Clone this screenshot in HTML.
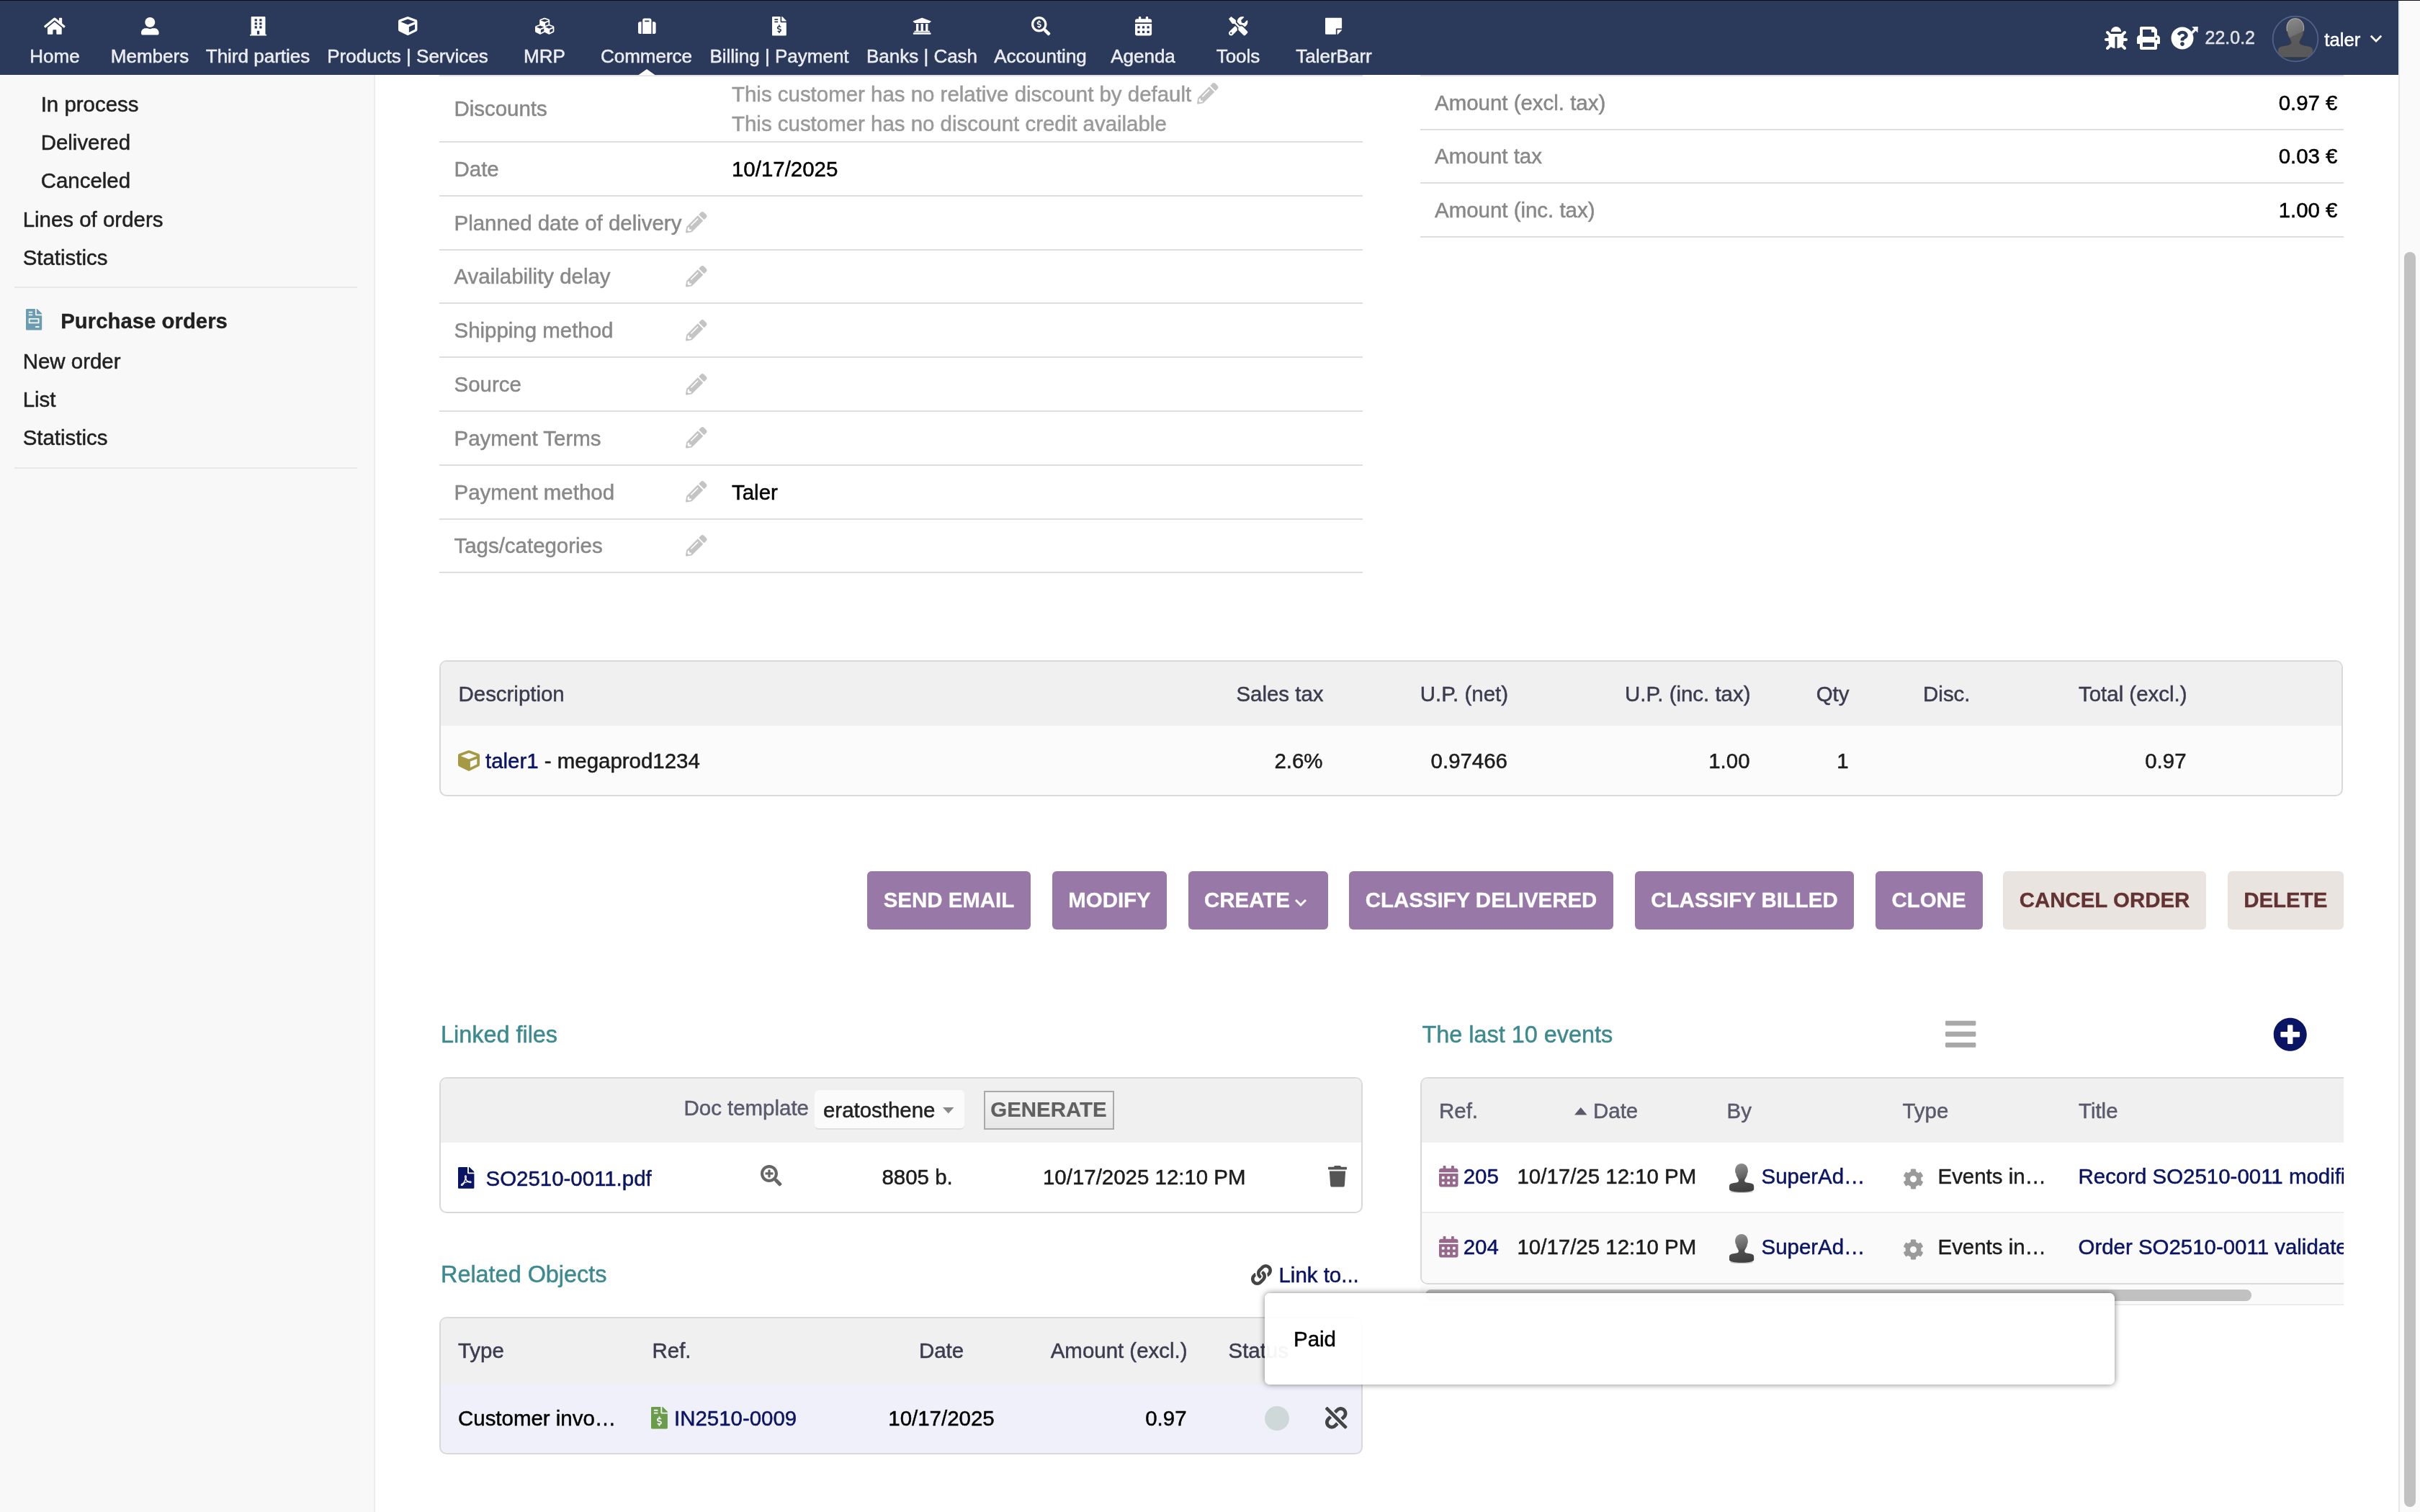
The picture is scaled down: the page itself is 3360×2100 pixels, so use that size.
<!DOCTYPE html>
<html><head><meta charset="utf-8"><title>Order</title>
<style>
html,body{margin:0;padding:0}
body{width:3360px;height:2100px;background:#fff;position:relative;font-family:"Liberation Sans",sans-serif;font-size:29.44px;color:#000}
div,svg{box-sizing:border-box}
svg{display:block;overflow:visible}
#root{-webkit-text-stroke:0.5px}
</style></head><body>
<div id="root" style="position:absolute;left:0;top:0;width:3360px;height:2100px;overflow:hidden;will-change:transform">
<div style="position:absolute;left:0.0px;top:104.0px;width:521.0px;height:1996.0px;background:#f8f8f8;border-right:2px solid #ececec"></div>
<div style="position:absolute;left:3330.0px;top:0.0px;width:30.0px;height:2100.0px;background:#fafafa;border-left:2px solid #e8e8e8"></div>
<div style="position:absolute;left:3338.0px;top:350.2px;width:16.0px;height:1743.0px;background:#c1c1c1;border-radius:8px"></div>
<div style="position:absolute;top:126.94px;font-size:29.44px;line-height:35.33px;color:#212121;white-space:pre;left:56.7px;">In process</div>
<div style="position:absolute;top:180.14px;font-size:29.44px;line-height:35.33px;color:#212121;white-space:pre;left:56.7px;">Delivered</div>
<div style="position:absolute;top:233.34px;font-size:29.44px;line-height:35.33px;color:#212121;white-space:pre;left:56.7px;">Canceled</div>
<div style="position:absolute;top:286.54px;font-size:29.44px;line-height:35.33px;color:#212121;white-space:pre;left:31.7px;">Lines of orders</div>
<div style="position:absolute;top:339.74px;font-size:29.44px;line-height:35.33px;color:#212121;white-space:pre;left:31.7px;">Statistics</div>
<div style="position:absolute;top:483.74px;font-size:29.44px;line-height:35.33px;color:#212121;white-space:pre;left:31.7px;">New order</div>
<div style="position:absolute;top:536.94px;font-size:29.44px;line-height:35.33px;color:#212121;white-space:pre;left:31.7px;">List</div>
<div style="position:absolute;top:590.34px;font-size:29.44px;line-height:35.33px;color:#212121;white-space:pre;left:31.7px;">Statistics</div>
<div style="position:absolute;top:428.22px;font-size:29.35px;line-height:35.22px;color:#212121;white-space:pre;font-weight:700;-webkit-text-stroke:0.3px;left:84.3px;">Purchase orders</div>
<div style="position:absolute;left:20.0px;top:397.5px;width:476.0px;height:2.0px;background:#e8e8e8"></div>
<div style="position:absolute;left:20.0px;top:648.5px;width:476.0px;height:2.0px;background:#e8e8e8"></div>
<svg style="position:absolute;left:35.7px;top:429.4px;" width="22.2" height="29.6" viewBox="0 0 384 512" preserveAspectRatio="none"><path fill="#6a9db2" d="M288 256H96v64h192v-64zm89-151L279.100 7c-4.500-4.500-10.600-7-17-7H256v128h128v-6.100c0-6.300-2.500-12.400-7-16.900zm-153 31V0H24C10.700 0 0 10.700 0 24v464c0 13.300 10.700 24 24 24h336c13.300 0 24-10.700 24-24V160H248c-13.200 0-24-10.800-24-24zM64 72c0-4.420 3.580-8 8-8h80c4.420 0 8 3.580 8 8v16c0 4.420-3.580 8-8 8H72c-4.420 0-8-3.580-8-8V72zm0 64c0-4.420 3.580-8 8-8h80c4.420 0 8 3.580 8 8v16c0 4.420-3.580 8-8 8H72c-4.420 0-8-3.580-8-8v-16zm256 304c0 4.420-3.580 8-8 8h-80c-4.420 0-8-3.580-8-8v-16c0-4.420 3.580-8 8-8h80c4.420 0 8 3.580 8 8v16zm0-200v96c0 8.840-7.160 16-16 16H80c-8.840 0-16-7.160-16-16v-96c0-8.840 7.160-16 16-16h224c8.840 0 16 7.160 16 16z"/></svg>
<div style="position:absolute;left:610.0px;top:103.5px;width:1282.0px;height:2.0px;background:#dedede"></div>
<div style="position:absolute;left:610.0px;top:196.0px;width:1282.0px;height:2.0px;background:#dedede"></div>
<div style="position:absolute;left:610.0px;top:271.0px;width:1282.0px;height:2.0px;background:#dedede"></div>
<div style="position:absolute;left:610.0px;top:345.5px;width:1282.0px;height:2.0px;background:#dedede"></div>
<div style="position:absolute;left:610.0px;top:420.0px;width:1282.0px;height:2.0px;background:#dedede"></div>
<div style="position:absolute;left:610.0px;top:495.0px;width:1282.0px;height:2.0px;background:#dedede"></div>
<div style="position:absolute;left:610.0px;top:570.0px;width:1282.0px;height:2.0px;background:#dedede"></div>
<div style="position:absolute;left:610.0px;top:644.5px;width:1282.0px;height:2.0px;background:#dedede"></div>
<div style="position:absolute;left:610.0px;top:719.5px;width:1282.0px;height:2.0px;background:#dedede"></div>
<div style="position:absolute;left:610.0px;top:794.0px;width:1282.0px;height:2.0px;background:#dedede"></div>
<div style="position:absolute;top:133.39px;font-size:29.44px;line-height:35.33px;color:#888888;white-space:pre;left:630.5px;">Discounts</div>
<div style="position:absolute;top:217.14px;font-size:29.44px;line-height:35.33px;color:#888888;white-space:pre;left:630.5px;">Date</div>
<div style="position:absolute;top:217.14px;font-size:29.44px;line-height:35.33px;color:#000;white-space:pre;left:1016.0px;">10/17/2025</div>
<div style="position:absolute;top:291.89px;font-size:29.44px;line-height:35.33px;color:#888888;white-space:pre;left:630.5px;">Planned date of delivery</div>
<svg style="position:absolute;left:952.0px;top:294.2px;" width="29.5" height="29.5" viewBox="0 0 512 512" preserveAspectRatio="none"><path fill="#c4c4c4" d="M497.9 142.1l-46.1 46.1c-4.7 4.7-12.3 4.7-17 0l-111-111c-4.7-4.7-4.7-12.3 0-17l46.1-46.1c18.7-18.7 49.1-18.7 67.9 0l60.1 60.1c18.8 18.7 18.8 49.1 0 67.9zM284.2 99.8L21.6 362.4.4 483.9c-2.9 16.4 11.4 30.6 27.8 27.8l121.5-21.3 262.6-262.6c4.7-4.7 4.7-12.3 0-17l-111-111c-4.8-4.7-12.4-4.7-17.1 0zM124.1 339.9c-5.5-5.5-5.5-14.3 0-19.8l154-154c5.5-5.5 14.3-5.5 19.8 0s5.5 14.3 0 19.8l-154 154c-5.5 5.5-14.3 5.5-19.8 0zM88 424h48v36.3l-64.5 11.3-31.1-31.1L51.7 376H88v48z"/></svg>
<div style="position:absolute;top:366.39px;font-size:29.44px;line-height:35.33px;color:#888888;white-space:pre;left:630.5px;">Availability delay</div>
<svg style="position:absolute;left:952.0px;top:368.8px;" width="29.5" height="29.5" viewBox="0 0 512 512" preserveAspectRatio="none"><path fill="#c4c4c4" d="M497.9 142.1l-46.1 46.1c-4.7 4.7-12.3 4.7-17 0l-111-111c-4.7-4.7-4.7-12.3 0-17l46.1-46.1c18.7-18.7 49.1-18.7 67.9 0l60.1 60.1c18.8 18.7 18.8 49.1 0 67.9zM284.2 99.8L21.6 362.4.4 483.9c-2.9 16.4 11.4 30.6 27.8 27.8l121.5-21.3 262.6-262.6c4.7-4.7 4.7-12.3 0-17l-111-111c-4.8-4.7-12.4-4.7-17.1 0zM124.1 339.9c-5.5-5.5-5.5-14.3 0-19.8l154-154c5.5-5.5 14.3-5.5 19.8 0s5.5 14.3 0 19.8l-154 154c-5.5 5.5-14.3 5.5-19.8 0zM88 424h48v36.3l-64.5 11.3-31.1-31.1L51.7 376H88v48z"/></svg>
<div style="position:absolute;top:441.14px;font-size:29.44px;line-height:35.33px;color:#888888;white-space:pre;left:630.5px;">Shipping method</div>
<svg style="position:absolute;left:952.0px;top:443.5px;" width="29.5" height="29.5" viewBox="0 0 512 512" preserveAspectRatio="none"><path fill="#c4c4c4" d="M497.9 142.1l-46.1 46.1c-4.7 4.7-12.3 4.7-17 0l-111-111c-4.7-4.7-4.7-12.3 0-17l46.1-46.1c18.7-18.7 49.1-18.7 67.9 0l60.1 60.1c18.8 18.7 18.8 49.1 0 67.9zM284.2 99.8L21.6 362.4.4 483.9c-2.9 16.4 11.4 30.6 27.8 27.8l121.5-21.3 262.6-262.6c4.7-4.7 4.7-12.3 0-17l-111-111c-4.8-4.7-12.4-4.7-17.1 0zM124.1 339.9c-5.5-5.5-5.5-14.3 0-19.8l154-154c5.5-5.5 14.3-5.5 19.8 0s5.5 14.3 0 19.8l-154 154c-5.5 5.5-14.3 5.5-19.8 0zM88 424h48v36.3l-64.5 11.3-31.1-31.1L51.7 376H88v48z"/></svg>
<div style="position:absolute;top:516.14px;font-size:29.44px;line-height:35.33px;color:#888888;white-space:pre;left:630.5px;">Source</div>
<svg style="position:absolute;left:952.0px;top:518.5px;" width="29.5" height="29.5" viewBox="0 0 512 512" preserveAspectRatio="none"><path fill="#c4c4c4" d="M497.9 142.1l-46.1 46.1c-4.7 4.7-12.3 4.7-17 0l-111-111c-4.7-4.7-4.7-12.3 0-17l46.1-46.1c18.7-18.7 49.1-18.7 67.9 0l60.1 60.1c18.8 18.7 18.8 49.1 0 67.9zM284.2 99.8L21.6 362.4.4 483.9c-2.9 16.4 11.4 30.6 27.8 27.8l121.5-21.3 262.6-262.6c4.7-4.7 4.7-12.3 0-17l-111-111c-4.8-4.7-12.4-4.7-17.1 0zM124.1 339.9c-5.5-5.5-5.5-14.3 0-19.8l154-154c5.5-5.5 14.3-5.5 19.8 0s5.5 14.3 0 19.8l-154 154c-5.5 5.5-14.3 5.5-19.8 0zM88 424h48v36.3l-64.5 11.3-31.1-31.1L51.7 376H88v48z"/></svg>
<div style="position:absolute;top:590.89px;font-size:29.44px;line-height:35.33px;color:#888888;white-space:pre;left:630.5px;">Payment Terms</div>
<svg style="position:absolute;left:952.0px;top:593.2px;" width="29.5" height="29.5" viewBox="0 0 512 512" preserveAspectRatio="none"><path fill="#c4c4c4" d="M497.9 142.1l-46.1 46.1c-4.7 4.7-12.3 4.7-17 0l-111-111c-4.7-4.7-4.7-12.3 0-17l46.1-46.1c18.7-18.7 49.1-18.7 67.9 0l60.1 60.1c18.8 18.7 18.8 49.1 0 67.9zM284.2 99.8L21.6 362.4.4 483.9c-2.9 16.4 11.4 30.6 27.8 27.8l121.5-21.3 262.6-262.6c4.7-4.7 4.7-12.3 0-17l-111-111c-4.8-4.7-12.4-4.7-17.1 0zM124.1 339.9c-5.5-5.5-5.5-14.3 0-19.8l154-154c5.5-5.5 14.3-5.5 19.8 0s5.5 14.3 0 19.8l-154 154c-5.5 5.5-14.3 5.5-19.8 0zM88 424h48v36.3l-64.5 11.3-31.1-31.1L51.7 376H88v48z"/></svg>
<div style="position:absolute;top:665.64px;font-size:29.44px;line-height:35.33px;color:#888888;white-space:pre;left:630.5px;">Payment method</div>
<div style="position:absolute;top:665.64px;font-size:29.44px;line-height:35.33px;color:#000;white-space:pre;left:1016.0px;">Taler</div>
<svg style="position:absolute;left:952.0px;top:668.0px;" width="29.5" height="29.5" viewBox="0 0 512 512" preserveAspectRatio="none"><path fill="#c4c4c4" d="M497.9 142.1l-46.1 46.1c-4.7 4.7-12.3 4.7-17 0l-111-111c-4.7-4.7-4.7-12.3 0-17l46.1-46.1c18.7-18.7 49.1-18.7 67.9 0l60.1 60.1c18.8 18.7 18.8 49.1 0 67.9zM284.2 99.8L21.6 362.4.4 483.9c-2.9 16.4 11.4 30.6 27.8 27.8l121.5-21.3 262.6-262.6c4.7-4.7 4.7-12.3 0-17l-111-111c-4.8-4.7-12.4-4.7-17.1 0zM124.1 339.9c-5.5-5.5-5.5-14.3 0-19.8l154-154c5.5-5.5 14.3-5.5 19.8 0s5.5 14.3 0 19.8l-154 154c-5.5 5.5-14.3 5.5-19.8 0zM88 424h48v36.3l-64.5 11.3-31.1-31.1L51.7 376H88v48z"/></svg>
<div style="position:absolute;top:740.39px;font-size:29.44px;line-height:35.33px;color:#888888;white-space:pre;left:630.5px;">Tags/categories</div>
<svg style="position:absolute;left:952.0px;top:742.8px;" width="29.5" height="29.5" viewBox="0 0 512 512" preserveAspectRatio="none"><path fill="#c4c4c4" d="M497.9 142.1l-46.1 46.1c-4.7 4.7-12.3 4.7-17 0l-111-111c-4.7-4.7-4.7-12.3 0-17l46.1-46.1c18.7-18.7 49.1-18.7 67.9 0l60.1 60.1c18.8 18.7 18.8 49.1 0 67.9zM284.2 99.8L21.6 362.4.4 483.9c-2.9 16.4 11.4 30.6 27.8 27.8l121.5-21.3 262.6-262.6c4.7-4.7 4.7-12.3 0-17l-111-111c-4.8-4.7-12.4-4.7-17.1 0zM124.1 339.9c-5.5-5.5-5.5-14.3 0-19.8l154-154c5.5-5.5 14.3-5.5 19.8 0s5.5 14.3 0 19.8l-154 154c-5.5 5.5-14.3 5.5-19.8 0zM88 424h48v36.3l-64.5 11.3-31.1-31.1L51.7 376H88v48z"/></svg>
<div style="position:absolute;top:112.64px;font-size:29.44px;line-height:35.33px;color:#999;white-space:pre;left:1016.0px;">This customer has no relative discount by default</div>
<div style="position:absolute;top:154.14px;font-size:29.44px;line-height:35.33px;color:#999;white-space:pre;left:1016.0px;">This customer has no discount credit available</div>
<svg style="position:absolute;left:1662.0px;top:115.0px;" width="29.5" height="29.5" viewBox="0 0 512 512" preserveAspectRatio="none"><path fill="#c4c4c4" d="M497.9 142.1l-46.1 46.1c-4.7 4.7-12.3 4.7-17 0l-111-111c-4.7-4.7-4.7-12.3 0-17l46.1-46.1c18.7-18.7 49.1-18.7 67.9 0l60.1 60.1c18.8 18.7 18.8 49.1 0 67.9zM284.2 99.8L21.6 362.4.4 483.9c-2.9 16.4 11.4 30.6 27.8 27.8l121.5-21.3 262.6-262.6c4.7-4.7 4.7-12.3 0-17l-111-111c-4.8-4.7-12.4-4.7-17.1 0zM124.1 339.9c-5.5-5.5-5.5-14.3 0-19.8l154-154c5.5-5.5 14.3-5.5 19.8 0s5.5 14.3 0 19.8l-154 154c-5.5 5.5-14.3 5.5-19.8 0zM88 424h48v36.3l-64.5 11.3-31.1-31.1L51.7 376H88v48z"/></svg>
<div style="position:absolute;left:1972.0px;top:103.5px;width:1282.0px;height:2.0px;background:#dedede"></div>
<div style="position:absolute;top:125.44px;font-size:29.44px;line-height:35.33px;color:#888888;white-space:pre;left:1992.0px;">Amount (excl. tax)</div>
<div style="position:absolute;top:125.44px;font-size:29.44px;line-height:35.33px;color:#000;white-space:pre;right:114.5px;">0.97 €</div>
<div style="position:absolute;left:1972.0px;top:179.0px;width:1282.0px;height:2.0px;background:#dedede"></div>
<div style="position:absolute;top:199.24px;font-size:29.44px;line-height:35.33px;color:#888888;white-space:pre;left:1992.0px;">Amount tax</div>
<div style="position:absolute;top:199.24px;font-size:29.44px;line-height:35.33px;color:#000;white-space:pre;right:114.5px;">0.03 €</div>
<div style="position:absolute;left:1972.0px;top:253.0px;width:1282.0px;height:2.0px;background:#dedede"></div>
<div style="position:absolute;top:274.34px;font-size:29.44px;line-height:35.33px;color:#888888;white-space:pre;left:1992.0px;">Amount (inc. tax)</div>
<div style="position:absolute;top:274.34px;font-size:29.44px;line-height:35.33px;color:#000;white-space:pre;right:114.5px;">1.00 €</div>
<div style="position:absolute;left:1972.0px;top:327.7px;width:1282.0px;height:2.0px;background:#dedede"></div>
<div style="position:absolute;left:0.0px;top:0.0px;width:3330.0px;height:104.0px;background:#2b3a5a"></div>
<div style="position:absolute;left:0.0px;top:0.0px;width:3360.0px;height:1.0px;background:#0c0f1a"></div>
<div style="position:absolute;top:62.69px;font-size:26px;line-height:31.20px;color:#eceef3;white-space:pre;left:76.0px;transform:translateX(-50%);">Home</div>
<div style="position:absolute;top:62.69px;font-size:26px;line-height:31.20px;color:#eceef3;white-space:pre;left:208.0px;transform:translateX(-50%);">Members</div>
<div style="position:absolute;top:62.69px;font-size:26px;line-height:31.20px;color:#eceef3;white-space:pre;left:358.0px;transform:translateX(-50%);">Third parties</div>
<div style="position:absolute;top:62.69px;font-size:26px;line-height:31.20px;color:#eceef3;white-space:pre;left:566.0px;transform:translateX(-50%);">Products | Services</div>
<div style="position:absolute;top:62.69px;font-size:26px;line-height:31.20px;color:#eceef3;white-space:pre;left:756.0px;transform:translateX(-50%);">MRP</div>
<div style="position:absolute;top:62.69px;font-size:26px;line-height:31.20px;color:#eceef3;white-space:pre;left:897.5px;transform:translateX(-50%);">Commerce</div>
<div style="position:absolute;top:62.69px;font-size:26px;line-height:31.20px;color:#eceef3;white-space:pre;left:1082.0px;transform:translateX(-50%);">Billing | Payment</div>
<div style="position:absolute;top:62.69px;font-size:26px;line-height:31.20px;color:#eceef3;white-space:pre;left:1280.0px;transform:translateX(-50%);">Banks | Cash</div>
<div style="position:absolute;top:62.69px;font-size:26px;line-height:31.20px;color:#eceef3;white-space:pre;left:1444.5px;transform:translateX(-50%);">Accounting</div>
<div style="position:absolute;top:62.69px;font-size:26px;line-height:31.20px;color:#eceef3;white-space:pre;left:1587.0px;transform:translateX(-50%);">Agenda</div>
<div style="position:absolute;top:62.69px;font-size:26px;line-height:31.20px;color:#eceef3;white-space:pre;left:1719.0px;transform:translateX(-50%);">Tools</div>
<div style="position:absolute;top:62.69px;font-size:26px;line-height:31.20px;color:#eceef3;white-space:pre;left:1852.0px;transform:translateX(-50%);">TalerBarr</div>
<svg style="position:absolute;left:61.4px;top:22.9px;" width="29.7" height="26.4" viewBox="0 0 576 512" preserveAspectRatio="none"><path fill="#fff" d="M280.37 148.26L96 300.11V464a16 16 0 0 0 16 16l112.060-.29a16 16 0 0 0 15.920-16V368a16 16 0 0 1 16-16h64a16 16 0 0 1 16 16v95.640a16 16 0 0 0 16 16.050L464 480a16 16 0 0 0 16-16V300L295.670 148.260a12.190 12.190 0 0 0-15.300 0zM571.600 251.470L488 182.560V44.050a12 12 0 0 0-12-12h-56a12 12 0 0 0-12 12v72.610L318.470 43a48 48 0 0 0-61 0L4.340 251.470a12 12 0 0 0-1.600 16.900l25.500 31A12 12 0 0 0 45.150 301l235.220-193.740a12.190 12.190 0 0 1 15.300 0L530.900 301a12 12 0 0 0 16.900-1.600l25.500-31a12 12 0 0 0-1.700-16.930z"/></svg>
<svg style="position:absolute;left:195.7px;top:23.8px;" width="24.6" height="24.6" viewBox="0 0 512 512" preserveAspectRatio="none"><path fill="#fff" d="M256 288c79.5 0 144-64.500 144-144S335.500 0 256 0 112 64.500 112 144s64.500 144 144 144zm128 32h-55.100c-22.200 10.200-46.900 16-72.900 16s-50.600-5.800-72.900-16H128C57.300 320 0 377.300 0 448v16c0 26.500 21.500 48 48 48h416c26.500 0 48-21.500 48-48v-16c0-70.700-57.300-128-128-128z"/></svg>
<svg style="position:absolute;left:347.1px;top:22.9px;" width="23.1" height="26.4" viewBox="0 0 448 512" preserveAspectRatio="none"><path fill="#fff" d="M436 480h-20V24c0-13.255-10.745-24-24-24H56C42.745 0 32 10.745 32 24v456H12c-6.627 0-12 5.373-12 12v20h448v-20c0-6.627-5.373-12-12-12zM128 76c0-6.627 5.373-12 12-12h40c6.627 0 12 5.373 12 12v40c0 6.627-5.373 12-12 12h-40c-6.627 0-12-5.373-12-12V76zm0 96c0-6.627 5.373-12 12-12h40c6.627 0 12 5.373 12 12v40c0 6.627-5.373 12-12 12h-40c-6.627 0-12-5.373-12-12v-40zm52 148h-40c-6.627 0-12-5.373-12-12v-40c0-6.627 5.373-12 12-12h40c6.627 0 12 5.373 12 12v40c0 6.627-5.373 12-12 12zm76 160h-64v-84c0-6.627 5.373-12 12-12h40c6.627 0 12 5.373 12 12v84zm64-172c0 6.627-5.373 12-12 12h-40c-6.627 0-12-5.373-12-12v-40c0-6.627 5.373-12 12-12h40c6.627 0 12 5.373 12 12v40zm0-96c0 6.627-5.373 12-12 12h-40c-6.627 0-12-5.373-12-12v-40c0-6.627 5.373-12 12-12h40c6.627 0 12 5.373 12 12v40zm0-96c0 6.627-5.373 12-12 12h-40c-6.627 0-12-5.373-12-12V76c0-6.627 5.373-12 12-12h40c6.627 0 12 5.373 12 12v40z"/></svg>
<svg style="position:absolute;left:553.3px;top:22.9px;" width="26.4" height="26.4" viewBox="0 0 512 512" preserveAspectRatio="none"><path fill="#fff" d="M239.1 6.3l-208 78c-18.7 7-31.1 25-31.1 45v225.1c0 18.2 10.3 34.8 26.5 42.9l208 104c13.5 6.8 29.4 6.8 42.9 0l208-104c16.3-8.1 26.5-24.8 26.5-42.9V129.3c0-20-12.4-37.9-31.1-44.9l-208-78C262 2.2 250 2.2 239.1 6.3zM256 68.4l192 72v1.1l-192 78-192-78v-1.1l192-72zm32 356V275.5l160-65v133.9l-160 80z"/></svg>
<svg style="position:absolute;left:743.2px;top:22.9px;" width="26.4" height="26.4" viewBox="0 0 512 512" preserveAspectRatio="none"><path fill="#fff" d="M488.6 250.2L392 214V105.5c0-15-9.3-28.400-23.400-33.700l-100-37.500c-8.100-3.100-17.100-3.100-25.300 0l-100 37.500c-14.100 5.300-23.400 18.700-23.400 33.700V214l-96.600 36.200C9.300 255.500 0 268.900 0 283.900V394c0 13.600 7.700 26.100 19.900 32.200l100 50c10.100 5.100 22.100 5.100 32.200 0l103.900-52 103.900 52c10.100 5.100 22.100 5.100 32.200 0l100-50c12.200-6.100 19.900-18.600 19.900-32.200V283.900c0-15-9.300-28.400-23.400-33.700zM358 214.800l-85 31.900v-68.200l85-37v73.300zM154 104.100l102-38.200 102 38.200v.6l-102 41.400-102-41.400v-.6zm84 291.100l-85 42.500v-79.100l85-38.800v75.400zm0-112l-102 41.400-102-41.400v-.6l102-38.200 102 38.200v.6zm240 112l-85 42.500v-79.100l85-38.800v75.400zm0-112l-102 41.400-102-41.400v-.6l102-38.200 102 38.200v.6z"/></svg>
<svg style="position:absolute;left:885.7px;top:23.8px;" width="24.6" height="24.6" viewBox="0 0 512 512" preserveAspectRatio="none"><path fill="#fff" d="M128 480h256V80c0-26.5-21.5-48-48-48H176c-26.5 0-48 21.5-48 48v400zm64-384h128v32H192V96zm320 80v256c0 26.5-21.5 48-48 48h-48V128h48c26.5 0 48 21.5 48 48zM96 480H48c-26.5 0-48-21.5-48-48V176c0-26.5 21.5-48 48-48h48v352z"/></svg>
<svg style="position:absolute;left:1072.1px;top:22.9px;" width="19.8" height="26.4" viewBox="0 0 384 512" preserveAspectRatio="none"><path fill="#fff" d="M377 105L279.100 7c-4.500-4.500-10.600-7-17-7H256v128h128v-6.100c0-6.300-2.500-12.400-7-16.900zm-153 31V0H24C10.700 0 0 10.700 0 24v464c0 13.300 10.700 24 24 24h336c13.300 0 24-10.700 24-24V160H248c-13.200 0-24-10.800-24-24zM64 72c0-4.420 3.580-8 8-8h80c4.420 0 8 3.580 8 8v16c0 4.420-3.580 8-8 8H72c-4.420 0-8-3.580-8-8V72zm0 80v-16c0-4.420 3.580-8 8-8h80c4.420 0 8 3.580 8 8v16c0 4.420-3.580 8-8 8H72c-4.420 0-8-3.580-8-8zm144 263.880V440c0 4.420-3.580 8-8 8h-16c-4.420 0-8-3.580-8-8v-24.290c-11.290-.58-22.270-4.520-31.370-11.350-3.900-2.930-4.100-8.770-.57-12.140l11.750-11.210c2.770-2.640 6.890-2.760 10.130-.73 3.870 2.420 8.260 3.720 12.820 3.720h28.110c6.500 0 11.800-5.920 11.800-13.190 0-5.950-3.610-11.190-8.770-12.730l-45-13.500c-18.590-5.580-31.580-23.420-31.580-43.390 0-24.520 19.050-44.440 42.670-45.070V232c0-4.420 3.580-8 8-8h16c4.420 0 8 3.580 8 8v24.290c11.290.58 22.270 4.510 31.370 11.350 3.900 2.930 4.100 8.770.57 12.140l-11.750 11.210c-2.770 2.640-6.890 2.760-10.130.73-3.870-2.430-8.260-3.720-12.820-3.720h-28.110c-6.500 0-11.800 5.920-11.800 13.190 0 5.950 3.610 11.190 8.770 12.730l45 13.500c18.590 5.580 31.580 23.420 31.580 43.390 0 24.530-19.050 44.440-42.670 45.070z"/></svg>
<svg style="position:absolute;left:1266.6px;top:22.9px;" width="26.4" height="26.4" viewBox="0 0 512 512" preserveAspectRatio="none"><path fill="#fff" d="M496 128v16a8 8 0 0 1-8 8h-24v12c0 6.627-5.373 12-12 12H60c-6.627 0-12-5.373-12-12v-12H24a8 8 0 0 1-8-8v-16a8 8 0 0 1 4.941-7.392l232-88a7.996 7.996 0 0 1 6.118 0l232 88A8 8 0 0 1 496 128zm-24 304H40c-13.255 0-24 10.745-24 24v16a8 8 0 0 0 8 8h464a8 8 0 0 0 8-8v-16c0-13.255-10.745-24-24-24zM96 192v192H60c-6.627 0-12 5.373-12 12v20h416v-20c0-6.627-5.373-12-12-12h-36V192h-64v192h-64V192h-64v192h-64V192H96z"/></svg>
<svg style="position:absolute;left:1432.0px;top:22.9px;" width="26.4" height="26.4" viewBox="0 0 512 512" preserveAspectRatio="none"><path fill="#fff" d="M505.040 442.660l-99.710-99.690c-4.500-4.500-10.600-7-17-7h-16.300c27.600-35.300 44-79.690 44-127.990C416.030 93.090 322.920 0 208.020 0S0 93.090 0 207.980s93.110 207.980 208.020 207.980c48.300 0 92.710-16.400 128.010-44v16.300c0 6.400 2.500 12.500 7 17l99.710 99.690c9.400 9.400 24.600 9.400 33.900 0l28.300-28.300c9.400-9.400 9.400-24.590.1-33.990zm-297.020-90.700c-79.540 0-144-64.340-144-143.980 0-79.530 64.350-143.980 144-143.980 79.540 0 144 64.340 144 143.980 0 79.530-64.350 143.980-144 143.980zm27.110-152.540l-45.010-13.500c-5.160-1.550-8.770-6.780-8.770-12.730 0-7.270 5.300-13.190 11.800-13.190h28.110c4.560 0 8.960 1.290 12.820 3.720 3.240 2.030 7.360 1.910 10.130-.73l11.750-11.210c3.530-3.370 3.330-9.210-.57-12.140-9.100-6.830-20.080-10.770-31.370-11.350V112c0-4.420-3.580-8-8-8h-16c-4.420 0-8 3.580-8 8v16.120c-23.630.63-42.680 20.550-42.680 45.070 0 19.970 12.990 37.810 31.580 43.390l45.010 13.500c5.160 1.550 8.770 6.780 8.770 12.730 0 7.270-5.300 13.190-11.800 13.190h-28.100c-4.560 0-8.960-1.290-12.820-3.720-3.240-2.030-7.360-1.910-10.130.73l-11.750 11.210c-3.530 3.370-3.330 9.210.57 12.140 9.100 6.830 20.080 10.770 31.370 11.350V304c0 4.420 3.580 8 8 8h16c4.420 0 8-3.580 8-8v-16.120c23.630-.63 42.680-20.540 42.680-45.070 0-19.970-12.990-37.810-31.590-43.390z"/></svg>
<svg style="position:absolute;left:1576.2px;top:22.9px;" width="23.1" height="26.4" viewBox="0 0 448 512" preserveAspectRatio="none"><path fill="#fff" d="M0 464c0 26.5 21.5 48 48 48h352c26.5 0 48-21.5 48-48V192H0v272zm320-196c0-6.6 5.4-12 12-12h40c6.6 0 12 5.4 12 12v40c0 6.6-5.4 12-12 12h-40c-6.6 0-12-5.4-12-12v-40zm0 128c0-6.6 5.4-12 12-12h40c6.6 0 12 5.4 12 12v40c0 6.6-5.4 12-12 12h-40c-6.6 0-12-5.4-12-12v-40zM192 268c0-6.6 5.4-12 12-12h40c6.6 0 12 5.4 12 12v40c0 6.6-5.4 12-12 12h-40c-6.6 0-12-5.4-12-12v-40zm0 128c0-6.6 5.4-12 12-12h40c6.6 0 12 5.4 12 12v40c0 6.6-5.4 12-12 12h-40c-6.6 0-12-5.4-12-12v-40zM64 268c0-6.6 5.4-12 12-12h40c6.6 0 12 5.4 12 12v40c0 6.6-5.4 12-12 12H76c-6.6 0-12-5.4-12-12v-40zm0 128c0-6.6 5.4-12 12-12h40c6.6 0 12 5.4 12 12v40c0 6.6-5.4 12-12 12H76c-6.6 0-12-5.4-12-12v-40zM400 64h-48V16c0-8.8-7.2-16-16-16h-32c-8.8 0-16 7.2-16 16v48H160V16c0-8.8-7.2-16-16-16h-32c-8.8 0-16 7.2-16 16v48H48C21.5 64 0 85.5 0 112v48h448v-48c0-26.5-21.5-48-48-48z"/></svg>
<svg style="position:absolute;left:1706.4px;top:22.9px;" width="26.4" height="26.4" viewBox="0 0 512 512" preserveAspectRatio="none"><path fill="#fff" d="M501.1 395.7L384 278.600c-23.100-23.100-57.600-27.600-85.400-13.900L192 158.100V96L64 0 0 64l96 128h62.100l106.600 106.600c-13.600 27.800-9.200 62.300 13.900 85.400l117.100 117.100c14.600 14.600 38.200 14.600 52.700 0l52.700-52.700c14.500-14.600 14.500-38.200 0-52.700zM331.700 225c28.300 0 54.900 11 74.900 31l19.400 19.400c15.800-6.900 30.800-16.500 43.800-29.500 37.100-37.100 49.700-89.300 37.900-136.700-2.200-9-13.500-12.100-20.100-5.500l-74.400 74.400-67.900-11.300L334 98.900l74.400-74.400c6.600-6.600 3.400-17.900-5.700-20.200-47.400-11.700-99.600.9-136.600 37.900-28.500 28.500-41.900 66.100-41.200 103.600l82.100 82.100c8.100-1.900 16.500-2.900 24.700-2.900zm-103.900 82l-56.700-56.700L18.700 402.800c-25 25-25 65.500 0 90.500s65.500 25 90.500 0l123.600-123.600c-7.600-19.900-9.900-41.600-5-62.700zM64 472c-13.200 0-24-10.800-24-24 0-13.300 10.700-24 24-24s24 10.700 24 24c0 13.200-10.700 24-24 24z"/></svg>
<svg style="position:absolute;left:1840.0px;top:22.9px;" width="23.1" height="26.4" viewBox="0 0 448 512" preserveAspectRatio="none"><path fill="#fff" d="M312 320h136V56c0-13.3-10.7-24-24-24H24C10.7 32 0 42.7 0 56v400c0 13.3 10.7 24 24 24h264V344c0-13.2 10.8-24 24-24zm129 55l-98 98c-4.5 4.5-10.6 7-17 7h-6V352h128v6.1c0 6.3-2.5 12.4-7 16.9z"/></svg>
<svg style="position:absolute;left:2921.6px;top:37.0px;" width="32.0" height="32.0" viewBox="0 0 512 512" preserveAspectRatio="none"><path fill="#fff" d="M511.988 288.9c-.478 17.43-15.217 31.1-32.653 31.1H424v16c0 21.864-4.882 42.584-13.6 61.145l60.228 60.228c12.496 12.497 12.496 32.758 0 45.255-12.498 12.497-32.759 12.496-45.256 0l-54.736-54.736C345.886 467.965 314.351 480 280 480V236c0-6.627-5.373-12-12-12h-24c-6.627 0-12 5.373-12 12v244c-34.351 0-65.886-12.035-90.636-32.108l-54.736 54.736c-12.498 12.497-32.759 12.496-45.256 0-12.496-12.497-12.496-32.758 0-45.255l60.228-60.228C92.882 378.584 88 357.864 88 336v-16H32.666C15.23 320 .491 306.33.013 288.9-.484 270.816 14.028 256 32 256h56v-58.745l-46.628-46.628c-12.496-12.497-12.496-32.758 0-45.255 12.498-12.497 32.758-12.497 45.256 0L141.255 160h229.489l54.627-54.627c12.498-12.497 32.758-12.497 45.256 0 12.496 12.497 12.496 32.758 0 45.255L424 197.255V256h56c17.972 0 32.484 14.816 31.988 32.9zM257 0c-61.856 0-112 50.144-112 112h224C369 50.144 318.856 0 257 0z"/></svg>
<svg style="position:absolute;left:2967.4px;top:37.0px;" width="32.0" height="32.0" viewBox="0 0 512 512" preserveAspectRatio="none"><path fill="#fff" d="M448 192V77.25c0-8.49-3.37-16.62-9.37-22.63L393.37 9.37c-6-6-14.14-9.37-22.63-9.37H96C78.33 0 64 14.33 64 32v160c-35.35 0-64 28.65-64 64v112c0 8.84 7.16 16 16 16h48v96c0 17.67 14.33 32 32 32h320c17.67 0 32-14.33 32-32v-96h48c8.84 0 16-7.16 16-16V256c0-35.35-28.65-64-64-64zm-64 256H128v-96h256v96zm0-224H128V64h192v48c0 8.84 7.16 16 16 16h48v96zm48 72c-13.25 0-24-10.75-24-24 0-13.26 10.75-24 24-24s24 10.74 24 24c0 13.25-10.75 24-24 24z"/></svg>
<svg style="position:absolute;left:3013.6px;top:37.0px;" width="32.0" height="32.0" viewBox="0 0 512 512" preserveAspectRatio="none"><path fill="#fff" d="M504 256c0 136.997-111.043 248-248 248S8 392.997 8 256C8 119.083 119.043 8 256 8s248 111.083 248 248zM262.655 90c-54.497 0-89.255 22.957-116.549 63.758-3.536 5.286-2.353 12.415 2.715 16.258l34.699 26.31c5.205 3.947 12.621 3.008 16.665-2.122 17.864-22.658 30.113-35.797 57.303-35.797 20.429 0 45.698 13.148 45.698 32.958 0 14.976-12.363 22.667-32.534 33.976C247.128 238.528 216 254.941 216 296v4c0 6.627 5.373 12 12 12h56c6.627 0 12-5.373 12-12v-1.333c0-28.462 83.186-29.647 83.186-106.667 0-58.002-60.165-102-116.531-102zM256 338c-25.365 0-46 20.635-46 46 0 25.364 20.635 46 46 46s46-20.636 46-46c0-25.365-20.635-46-46-46z"/></svg>
<svg style="position:absolute;left:3036.0px;top:33.0px;" width="20.0" height="20.0" viewBox="0 0 20 20" preserveAspectRatio="none"><path d="M5.5 14.5L12 8" stroke="#f2f4f8" stroke-width="3.6"/><path fill="#f2f4f8" d="M7.2 4.2l8.6-.3-.3 8.600z"/></svg>
<div style="position:absolute;top:37.24px;font-size:25px;line-height:30.00px;color:#e2e2e4;white-space:pre;left:3061.5px;">22.0.2</div>
<svg style="position:absolute;left:3140.0px;top:10.0px;" width="100.0" height="90.0" viewBox="0 0 100 90" preserveAspectRatio="none"><defs><linearGradient id="ag" gradientUnits="userSpaceOnUse" x1="40" y1="15" x2="56" y2="50"><stop offset="0" stop-color="#8a8a8a"/><stop offset="0.62" stop-color="#707070"/><stop offset="0.64" stop-color="#5c5c5c"/><stop offset="1" stop-color="#595959"/></linearGradient><clipPath id="ac"><circle cx="47" cy="44" r="30.6"/></clipPath></defs><circle cx="47" cy="44" r="31.4" fill="none" stroke="#50638b" stroke-width="1.8"/><g clip-path="url(#ac)"><ellipse cx="47" cy="70.5" rx="19" ry="2.6" fill="#2e3a50"/><path fill="url(#ag)" stroke="#3a3f4a" stroke-width="0.8" d="M46.85 14.9C54.5 14.9 59.5 21 59.5 29C59.5 32.5 58.8 34 58.2 34.8C58 38 57.2 40 56 41.7C55 44 53.5 46 53 47.6L53 49.5C53 51.5 56 52.5 60 53.2L66 54.3C70 55.2 71.4 57.5 71.4 60.5L71.4 69.6L22.6 69.6L22.600 60.5C22.6 57.5 24 55.2 28 54.3L34 53.2C38 52.5 41 51.5 41 49.5L41 47.6C40.5 46 39 44 38.1 41.7C36.9 40 36.1 38 35.9 34.8C35 34 34.2 32.5 34.2 29C34.2 21 39.2 14.9 46.85 14.9Z"/><path fill="none" stroke="rgba(255,255,255,0.45)" stroke-width="0.9" d="M35.6 33C35 31.500 35 30.500 35 29C35 21.600 39.800 15.700 46.850 15.700C53.900 15.700 58.700 21.600 58.700 29C58.700 30.500 58.600 31.500 58.100 33"/></g></svg>
<div style="position:absolute;top:39.67px;font-size:25.7px;line-height:30.84px;color:#fff;white-space:pre;left:3227.3px;">taler</div>
<svg style="position:absolute;left:3290.0px;top:48.0px;" width="18.0" height="11.0" viewBox="0 0 20 12" preserveAspectRatio="none"><path d="M2 2l8 8 8-8" fill="none" stroke="#fff" stroke-width="3"/></svg>
<svg style="position:absolute;left:885.5px;top:96.0px;" width="24.0" height="8.5" viewBox="0 0 24 10" preserveAspectRatio="none"><path fill="#fff" d="M0 10L12 0l12 10z"/></svg>
<div style="position:absolute;left:610.0px;top:917.0px;width:2643.0px;height:188.5px;border:2px solid #d9d9d9;border-radius:10px;background:#fbfbfb;overflow:hidden"></div>
<div style="position:absolute;left:612.0px;top:919.0px;width:2639.0px;height:88.5px;background:#f0f0f0;border-radius:8px 8px 0 0"></div>
<div style="position:absolute;top:945.64px;font-size:29.44px;line-height:35.33px;color:#3c3c50;white-space:pre;left:636.5px;">Description</div>
<div style="position:absolute;top:945.64px;font-size:29.44px;line-height:35.33px;color:#3c3c50;white-space:pre;right:1522.5px;">Sales tax</div>
<div style="position:absolute;top:1039.04px;font-size:29.44px;line-height:35.33px;color:#1c1c1c;white-space:pre;right:1523.5px;">2.6%</div>
<div style="position:absolute;top:945.64px;font-size:29.44px;line-height:35.33px;color:#3c3c50;white-space:pre;right:1266.0px;">U.P. (net)</div>
<div style="position:absolute;top:1039.04px;font-size:29.44px;line-height:35.33px;color:#1c1c1c;white-space:pre;right:1267.0px;">0.97466</div>
<div style="position:absolute;top:945.64px;font-size:29.44px;line-height:35.33px;color:#3c3c50;white-space:pre;right:929.5px;">U.P. (inc. tax)</div>
<div style="position:absolute;top:1039.04px;font-size:29.44px;line-height:35.33px;color:#1c1c1c;white-space:pre;right:930.5px;">1.00</div>
<div style="position:absolute;top:945.64px;font-size:29.44px;line-height:35.33px;color:#3c3c50;white-space:pre;right:792.5px;">Qty</div>
<div style="position:absolute;top:1039.04px;font-size:29.44px;line-height:35.33px;color:#1c1c1c;white-space:pre;right:793.5px;">1</div>
<div style="position:absolute;top:945.64px;font-size:29.44px;line-height:35.33px;color:#3c3c50;white-space:pre;right:624.5px;">Disc.</div>
<div style="position:absolute;top:945.64px;font-size:29.44px;line-height:35.33px;color:#3c3c50;white-space:pre;right:323.5px;">Total (excl.)</div>
<div style="position:absolute;top:1039.04px;font-size:29.44px;line-height:35.33px;color:#1c1c1c;white-space:pre;right:324.5px;">0.97</div>
<svg style="position:absolute;left:636.0px;top:1042.0px;" width="30.0" height="29.0" viewBox="0 0 512 512" preserveAspectRatio="none"><path fill="#a69944" d="M239.1 6.3l-208 78c-18.7 7-31.1 25-31.1 45v225.1c0 18.2 10.3 34.8 26.5 42.9l208 104c13.5 6.8 29.4 6.8 42.9 0l208-104c16.3-8.1 26.5-24.8 26.5-42.9V129.3c0-20-12.4-37.9-31.1-44.9l-208-78C262 2.2 250 2.2 239.1 6.3zM256 68.4l192 72v1.1l-192 78-192-78v-1.1l192-72zm32 356V275.5l160-65v133.9l-160 80z"/></svg>
<div style="position:absolute;top:1039.04px;font-size:29.44px;line-height:35.33px;color:#1c1c1c;white-space:pre;left:674.0px;"><span style="color:#0a1464">taler1</span> - megaprod1234</div>
<div style="position:absolute;left:1204px;top:1210px;width:227px;height:80.5px;background:#9778a6;border-radius:6px;color:#fff;font-weight:700;-webkit-text-stroke:0.3px;font-size:29.44px;line-height:80.5px;text-align:center;white-space:pre">SEND EMAIL</div>
<div style="position:absolute;left:1461px;top:1210px;width:159px;height:80.5px;background:#9778a6;border-radius:6px;color:#fff;font-weight:700;-webkit-text-stroke:0.3px;font-size:29.44px;line-height:80.5px;text-align:center;white-space:pre">MODIFY</div>
<div style="position:absolute;left:1650px;top:1210px;width:194px;height:80.5px;background:#9778a6;border-radius:6px;color:#fff;font-weight:700;-webkit-text-stroke:0.3px;font-size:29.44px;line-height:80.5px;text-align:center;white-space:pre">CREATE<svg style="display:inline-block;margin-left:6px;margin-right:7px;vertical-align:1.5px" width="18" height="11" viewBox="0 0 18 11"><path d="M2 2l7 7 7-7" fill="none" stroke="#fff" stroke-width="3"/></svg></div>
<div style="position:absolute;left:1873px;top:1210px;width:367px;height:80.5px;background:#9778a6;border-radius:6px;color:#fff;font-weight:700;-webkit-text-stroke:0.3px;font-size:29.44px;line-height:80.5px;text-align:center;white-space:pre">CLASSIFY DELIVERED</div>
<div style="position:absolute;left:2270px;top:1210px;width:304px;height:80.5px;background:#9778a6;border-radius:6px;color:#fff;font-weight:700;-webkit-text-stroke:0.3px;font-size:29.44px;line-height:80.5px;text-align:center;white-space:pre">CLASSIFY BILLED</div>
<div style="position:absolute;left:2603.5px;top:1210px;width:149.0px;height:80.5px;background:#9778a6;border-radius:6px;color:#fff;font-weight:700;-webkit-text-stroke:0.3px;font-size:29.44px;line-height:80.5px;text-align:center;white-space:pre">CLONE</div>
<div style="position:absolute;left:2781px;top:1210px;width:282px;height:80.5px;background:#eae4e1;border-radius:6px;color:#633232;font-weight:700;-webkit-text-stroke:0.3px;font-size:29.44px;line-height:80.5px;text-align:center;white-space:pre">CANCEL ORDER</div>
<div style="position:absolute;left:3092.5px;top:1210px;width:161.5px;height:80.5px;background:#eae4e1;border-radius:6px;color:#633232;font-weight:700;-webkit-text-stroke:0.3px;font-size:29.44px;line-height:80.5px;text-align:center;white-space:pre">DELETE</div>
<div style="position:absolute;top:1417.83px;font-size:32.4px;line-height:38.88px;color:#3c8a8f;white-space:pre;left:612.0px;">Linked files</div>
<div style="position:absolute;left:610.0px;top:1496.0px;width:1282.0px;height:189.0px;border:2px solid #d9d9d9;border-radius:10px;background:#fff;overflow:hidden"></div>
<div style="position:absolute;left:612.0px;top:1498.0px;width:1278.0px;height:88.5px;background:#f0f0f0;border-radius:8px 8px 0 0"></div>
<div style="position:absolute;top:1521.34px;font-size:29.44px;line-height:35.33px;color:#5a5a6e;white-space:pre;left:949.5px;">Doc template</div>
<div style="position:absolute;left:1130.5px;top:1513.5px;width:208.5px;height:55.0px;background:#fbfbfb;border-radius:6px;border-bottom:2px solid #e0e0e0"></div>
<div style="position:absolute;top:1523.94px;font-size:29.44px;line-height:35.33px;color:#222;white-space:pre;left:1143.0px;">eratosthene</div>
<svg style="position:absolute;left:1309.0px;top:1538.0px;" width="15.5" height="8.5" viewBox="0 0 16 9" preserveAspectRatio="none"><path fill="#888" d="M0 0h16L8 9z"/></svg>
<div style="position:absolute;left:1365.5px;top:1514.5px;width:181px;height:54px;border:2px solid #a9a9a9;background:linear-gradient(#f4f4f4,#e6e6e6);color:#606060;font-weight:700;font-size:29.44px;line-height:48px;-webkit-text-stroke:0.2px;text-align:center">GENERATE</div>
<svg style="position:absolute;left:635.7px;top:1621.0px;" width="22.4" height="29.8" viewBox="0 0 384 512" preserveAspectRatio="none"><path fill="#0a1464" d="M181.9 256.1c-5-16-4.900-46.900-2-46.900 8.400 0 7.600 36.900 2 46.900zm-1.700 47.200c-7.700 20.200-17.300 43.300-28.400 62.700 18.300-7 39-17.200 62.900-21.900-12.700-9.600-24.900-23.400-34.500-40.800zM86.100 428.100c0 .8 13.200-5.400 34.900-40.200-6.700 6.300-29.100 24.500-34.900 40.200zM248 160h136v328c0 13.300-10.700 24-24 24H24c-13.300 0-24-10.700-24-24V24C0 10.700 10.700 0 24 0h200v136c0 13.200 10.800 24 24 24zm-8 171.800c-20-12.200-33.300-29-42.700-53.800 4.500-18.500 11.600-46.600 6.200-64.200-4.700-29.400-42.400-26.500-47.800-6.800-5 18.300-.4 44.100 8.100 77-11.600 27.600-28.700 64.600-40.800 85.800-.1 0-.1.100-.2.100-27.100 13.900-73.600 44.500-54.500 68 5.600 6.900 16 10 21.500 10 17.900 0 35.700-18 61.100-61.800 25.800-8.500 54.100-19.100 79-23.200 21.700 11.800 47.100 19.500 64 19.500 29.200 0 31.200-32 19.700-43.400-13.900-13.600-54.300-9.700-73.600-7.200zM377 105L279 7c-4.500-4.500-10.600-7-17-7h-6v128h128v-6.100c0-6.300-2.500-12.400-7-16.900zm-74.100 255.300c4.100-2.700-2.500-11.900-42.800-9 37.100 15.800 42.800 9 42.800 9z"/></svg>
<div style="position:absolute;top:1619.14px;font-size:29.44px;line-height:35.33px;color:#0a1464;white-space:pre;left:674.5px;">SO2510-0011.pdf</div>
<svg style="position:absolute;left:1055.5px;top:1618.0px;" width="29.5" height="29.5" viewBox="0 0 512 512" preserveAspectRatio="none"><path fill="#666" d="M304 192v32c0 6.6-5.4 12-12 12h-56v56c0 6.6-5.4 12-12 12h-32c-6.6 0-12-5.4-12-12v-56h-56c-6.6 0-12-5.4-12-12v-32c0-6.6 5.4-12 12-12h56v-56c0-6.6 5.4-12 12-12h32c6.6 0 12 5.4 12 12v56h56c6.6 0 12 5.4 12 12zm201 284.700L476.700 505c-9.400 9.400-24.600 9.400-33.900 0L343 405.300c-4.500-4.500-7-10.600-7-17V372c-35.300 27.600-79.700 44-128 44C93.100 416 0 322.900 0 208S93.100 0 208 0s208 93.100 208 208c0 48.300-16.400 92.700-44 128h16.300c6.400 0 12.500 2.500 17 7l99.700 99.700c9.300 9.400 9.300 24.600 0 34zM344 208c0-75.200-60.800-136-136-136S72 132.800 72 208s60.800 136 136 136 136-60.800 136-136z"/></svg>
<div style="position:absolute;top:1617.14px;font-size:29.44px;line-height:35.33px;color:#1c1c1c;white-space:pre;left:1224.5px;">8805 b.</div>
<div style="position:absolute;top:1617.14px;font-size:29.44px;line-height:35.33px;color:#1c1c1c;white-space:pre;left:1448.0px;">10/17/2025 12:10 PM</div>
<svg style="position:absolute;left:1844.0px;top:1619.0px;" width="26.0" height="29.5" viewBox="0 0 448 512" preserveAspectRatio="none"><path fill="#555" d="M432 32H312l-9.4-18.7A24 24 0 0 0 281.1 0H166.8a23.72 23.72 0 0 0-21.4 13.3L136 32H16A16 16 0 0 0 0 48v32a16 16 0 0 0 16 16h416a16 16 0 0 0 16-16V48a16 16 0 0 0-16-16zM53.2 467a48 48 0 0 0 47.9 45h245.8a48 48 0 0 0 47.9-45L416 128H32z"/></svg>
<div style="position:absolute;top:1750.83px;font-size:32.4px;line-height:38.88px;color:#3c8a8f;white-space:pre;left:612.0px;">Related Objects</div>
<svg style="position:absolute;left:1737.3px;top:1755.5px;" width="29.0" height="29.0" viewBox="0 0 512 512" preserveAspectRatio="none"><path fill="#444" d="M326.612 185.391c59.747 59.809 58.927 155.698.36 214.59-.11.12-.24.25-.36.37l-67.2 67.2c-59.27 59.27-155.699 59.262-214.96 0-59.27-59.26-59.27-155.7 0-214.96l37.106-37.106c9.84-9.84 26.786-3.3 27.294 10.606.648 17.722 3.826 35.527 9.69 52.721 1.986 5.822.567 12.262-3.783 16.612l-13.087 13.087c-28.026 28.026-28.905 73.66-1.155 101.96 28.024 28.579 74.086 28.749 102.325.51l67.2-67.19c28.191-28.191 28.073-73.757 0-101.83-3.701-3.694-7.429-6.564-10.341-8.569a16.037 16.037 0 0 1-6.947-12.606c-.396-10.567 3.348-21.456 11.698-29.806l21.054-21.055c5.521-5.521 14.182-6.199 20.584-1.731a152.482 152.482 0 0 1 20.522 17.197zM467.547 44.449c-59.261-59.262-155.69-59.27-214.96 0l-67.2 67.2c-.12.12-.25.25-.36.37-58.566 58.892-59.387 154.781.36 214.59a152.454 152.454 0 0 0 20.521 17.196c6.402 4.468 15.064 3.789 20.584-1.731l21.054-21.055c8.35-8.35 12.094-19.239 11.698-29.806a16.037 16.037 0 0 0-6.947-12.606c-2.912-2.005-6.64-4.875-10.341-8.569-28.073-28.073-28.191-73.639 0-101.83l67.2-67.19c28.239-28.239 74.3-28.069 102.325.51 27.75 28.3 26.872 73.934-1.155 101.96l-13.087 13.087c-4.35 4.35-5.769 10.79-3.783 16.612 5.864 17.194 9.042 34.999 9.69 52.721.509 13.906 17.454 20.446 27.294 10.606l37.106-37.106c59.271-59.259 59.271-155.699.001-214.959z"/></svg>
<div style="position:absolute;top:1752.64px;font-size:29.44px;line-height:35.33px;color:#0a1464;white-space:pre;left:1775.5px;">Link to...</div>
<div style="position:absolute;left:610.0px;top:1829.0px;width:1282.0px;height:190.5px;border:2px solid #d9d9d9;border-radius:10px;background:#f0f0fa;overflow:hidden"></div>
<div style="position:absolute;left:612.0px;top:1831.0px;width:1278.0px;height:91.0px;background:#f0f0f0;border-radius:8px 8px 0 0"></div>
<div style="position:absolute;top:1858.14px;font-size:29.44px;line-height:35.33px;color:#3c3c50;white-space:pre;left:636.0px;">Type</div>
<div style="position:absolute;top:1858.14px;font-size:29.44px;line-height:35.33px;color:#3c3c50;white-space:pre;left:905.5px;">Ref.</div>
<div style="position:absolute;top:1858.14px;font-size:29.44px;line-height:35.33px;color:#3c3c50;white-space:pre;left:1307.0px;transform:translateX(-50%);">Date</div>
<div style="position:absolute;top:1858.14px;font-size:29.44px;line-height:35.33px;color:#3c3c50;white-space:pre;right:1711.5px;">Amount (excl.)</div>
<div style="position:absolute;top:1858.14px;font-size:29.44px;line-height:35.33px;color:#3c3c50;white-space:pre;left:1705.5px;">Status</div>
<div style="position:absolute;top:1952.14px;font-size:29.44px;line-height:35.33px;color:#000;white-space:pre;left:636.0px;">Customer invo…</div>
<svg style="position:absolute;left:904.4px;top:1953.5px;" width="22.9" height="30.5" viewBox="0 0 384 512" preserveAspectRatio="none"><path fill="#6a9c4a" d="M377 105L279.100 7c-4.500-4.500-10.600-7-17-7H256v128h128v-6.100c0-6.300-2.500-12.400-7-16.900zm-153 31V0H24C10.700 0 0 10.700 0 24v464c0 13.300 10.700 24 24 24h336c13.300 0 24-10.700 24-24V160H248c-13.200 0-24-10.800-24-24zM64 72c0-4.420 3.580-8 8-8h80c4.420 0 8 3.580 8 8v16c0 4.420-3.580 8-8 8H72c-4.420 0-8-3.580-8-8V72zm0 80v-16c0-4.420 3.580-8 8-8h80c4.420 0 8 3.580 8 8v16c0 4.420-3.580 8-8 8H72c-4.420 0-8-3.580-8-8zm144 263.880V440c0 4.420-3.580 8-8 8h-16c-4.420 0-8-3.580-8-8v-24.290c-11.290-.58-22.270-4.520-31.370-11.350-3.900-2.930-4.100-8.770-.57-12.140l11.750-11.210c2.770-2.640 6.890-2.760 10.130-.73 3.870 2.420 8.260 3.720 12.820 3.720h28.110c6.500 0 11.800-5.920 11.800-13.190 0-5.950-3.610-11.190-8.770-12.730l-45-13.500c-18.590-5.580-31.580-23.420-31.580-43.390 0-24.520 19.050-44.440 42.670-45.070V232c0-4.420 3.580-8 8-8h16c4.420 0 8 3.580 8 8v24.290c11.290.58 22.270 4.510 31.370 11.350 3.900 2.930 4.100 8.770.57 12.140l-11.750 11.210c-2.770 2.640-6.890 2.760-10.130.73-3.870-2.430-8.260-3.720-12.820-3.720h-28.110c-6.500 0-11.800 5.920-11.800 13.190 0 5.950 3.610 11.190 8.770 12.730l45 13.500c18.590 5.580 31.580 23.420 31.580 43.390 0 24.530-19.050 44.440-42.670 45.070z"/></svg>
<div style="position:absolute;top:1952.14px;font-size:29.44px;line-height:35.33px;color:#0a1464;white-space:pre;left:936.0px;">IN2510-0009</div>
<div style="position:absolute;top:1952.14px;font-size:29.44px;line-height:35.33px;color:#000;white-space:pre;left:1307.0px;transform:translateX(-50%);">10/17/2025</div>
<div style="position:absolute;top:1952.14px;font-size:29.44px;line-height:35.33px;color:#000;white-space:pre;right:1712.5px;">0.97</div>
<div style="position:absolute;left:1756.0px;top:1952.5px;width:34.0px;height:34.0px;background:#cfd8d8;border-radius:50%"></div>
<svg style="position:absolute;left:1840.4px;top:1954.0px;" width="30.5" height="30.5" viewBox="0 0 512 512" preserveAspectRatio="none"><path fill="#444" d="M304.083 405.907c4.686 4.686 4.686 12.284 0 16.971l-44.674 44.674c-59.263 59.262-155.693 59.266-214.961 0-59.264-59.265-59.264-155.696 0-214.96l44.675-44.675c4.686-4.686 12.284-4.686 16.971 0l39.598 39.598c4.686 4.686 4.686 12.284 0 16.971l-44.675 44.674c-28.072 28.073-28.072 73.75 0 101.823 28.072 28.072 73.75 28.073 101.824 0l44.674-44.674c4.686-4.686 12.284-4.686 16.971 0l39.597 39.598zm-56.568-260.216c4.686 4.686 12.284 4.686 16.971 0l44.674-44.674c28.072-28.075 73.75-28.073 101.824 0 28.072 28.073 28.072 73.75 0 101.823l-44.675 44.674c-4.686 4.686-4.686 12.284 0 16.971l39.598 39.598c4.686 4.686 12.284 4.686 16.971 0l44.675-44.675c59.265-59.265 59.265-155.695 0-214.96-59.266-59.264-155.695-59.264-214.961 0l-44.674 44.674c-4.686 4.686-4.686 12.284 0 16.971l39.597 39.598zm234.828 359.28l22.627-22.627c9.373-9.373 9.373-24.569 0-33.941L63.598 7.029c-9.373-9.373-24.569-9.373-33.941 0L7.029 29.657c-9.373 9.373-9.373 24.569 0 33.941l441.373 441.373c9.373 9.372 24.569 9.372 33.941 0z"/></svg>
<div style="position:absolute;top:1417.83px;font-size:32.4px;line-height:38.88px;color:#3c8a8f;white-space:pre;left:1974.5px;">The last 10 events</div>
<svg style="position:absolute;left:2701.3px;top:1412.0px;" width="42.4" height="48.5" viewBox="0 0 448 512" preserveAspectRatio="none"><path fill="#a8a8a8" d="M16 132h416c8.837 0 16-7.163 16-16V76c0-8.837-7.163-16-16-16H16C7.163 60 0 67.163 0 76v40c0 8.837 7.163 16 16 16zm0 160h416c8.837 0 16-7.163 16-16v-40c0-8.837-7.163-16-16-16H16c-8.837 0-16 7.163-16 16v40c0 8.837 7.163 16 16 16zm0 160h416c8.837 0 16-7.163 16-16v-40c0-8.837-7.163-16-16-16H16c-8.837 0-16 7.163-16 16v40c0 8.837 7.163 16 16 16z"/></svg>
<svg style="position:absolute;left:3156.0px;top:1412.5px;" width="47.5" height="47.5" viewBox="0 0 512 512" preserveAspectRatio="none"><path fill="#0a1464" d="M256 8C119 8 8 119 8 256s111 248 248 248 248-111 248-248S393 8 256 8zm144 276c0 6.600-5.400 12-12 12h-92v92c0 6.600-5.400 12-12 12h-56c-6.600 0-12-5.400-12-12v-92h-92c-6.600 0-12-5.400-12-12v-56c0-6.600 5.400-12 12-12h92v-92c0-6.600 5.400-12 12-12h56c6.600 0 12 5.400 12 12v92h92c6.600 0 12 5.400 12 12v56z"/></svg>
<div style="position:absolute;left:1972px;top:1496px;width:1282px;height:330px;overflow:hidden">
<div style="position:absolute;left:0;top:0;width:1500px;height:288px;border:2px solid #d9d9d9;border-radius:10px;background:#fff;overflow:hidden"><div style="position:absolute;left:0;top:0;width:1500px;height:88.5px;background:#f0f0f0"></div><div style="position:absolute;left:0;top:184.5px;width:1500px;height:2px;background:#ececec"></div><div style="position:absolute;left:0;top:186.5px;width:1500px;height:98px;background:#fafafa"></div></div>
</div>
<div style="position:absolute;top:1524.94px;font-size:29.44px;line-height:35.33px;color:#5a5a6c;white-space:pre;left:1998.0px;">Ref.</div>
<div style="position:absolute;top:1524.94px;font-size:29.44px;line-height:35.33px;color:#5a5a6c;white-space:pre;left:2212.0px;">Date</div>
<div style="position:absolute;top:1524.94px;font-size:29.44px;line-height:35.33px;color:#5a5a6c;white-space:pre;left:2397.5px;">By</div>
<div style="position:absolute;top:1524.94px;font-size:29.44px;line-height:35.33px;color:#5a5a6c;white-space:pre;left:2641.5px;">Type</div>
<div style="position:absolute;top:1524.94px;font-size:29.44px;line-height:35.33px;color:#5a5a6c;white-space:pre;left:2886.0px;">Title</div>
<svg style="position:absolute;left:2185.8px;top:1537.8px;" width="17.5" height="10.5" viewBox="0 0 17 9" preserveAspectRatio="none"><path fill="#5a5a6c" d="M0 9L8.5 0 17 9z"/></svg>
<svg style="position:absolute;left:1998.0px;top:1618.7px;" width="26.5" height="29.5" viewBox="0 0 448 512" preserveAspectRatio="none"><path fill="#96698c" d="M0 464c0 26.5 21.5 48 48 48h352c26.5 0 48-21.5 48-48V192H0v272zm320-196c0-6.6 5.4-12 12-12h40c6.6 0 12 5.4 12 12v40c0 6.6-5.4 12-12 12h-40c-6.6 0-12-5.4-12-12v-40zm0 128c0-6.6 5.4-12 12-12h40c6.6 0 12 5.4 12 12v40c0 6.6-5.4 12-12 12h-40c-6.6 0-12-5.4-12-12v-40zM192 268c0-6.6 5.4-12 12-12h40c6.6 0 12 5.4 12 12v40c0 6.6-5.4 12-12 12h-40c-6.6 0-12-5.4-12-12v-40zm0 128c0-6.6 5.4-12 12-12h40c6.6 0 12 5.4 12 12v40c0 6.6-5.4 12-12 12h-40c-6.6 0-12-5.4-12-12v-40zM64 268c0-6.6 5.4-12 12-12h40c6.6 0 12 5.4 12 12v40c0 6.6-5.4 12-12 12H76c-6.6 0-12-5.4-12-12v-40zm0 128c0-6.6 5.4-12 12-12h40c6.6 0 12 5.4 12 12v40c0 6.6-5.4 12-12 12H76c-6.6 0-12-5.4-12-12v-40zM400 64h-48V16c0-8.8-7.2-16-16-16h-32c-8.8 0-16 7.2-16 16v48H160V16c0-8.8-7.2-16-16-16h-32c-8.8 0-16 7.2-16 16v48H48C21.5 64 0 85.5 0 112v48h448v-48c0-26.5-21.5-48-48-48z"/></svg>
<div style="position:absolute;top:1616.34px;font-size:29.44px;line-height:35.33px;color:#0a1464;white-space:pre;left:2031.7px;">205</div>
<div style="position:absolute;top:1616.34px;font-size:29.44px;line-height:35.33px;color:#1c1c1c;white-space:pre;left:2106.5px;">10/17/25 12:10 PM</div>
<svg style="position:absolute;left:2401.3px;top:1616.0px;" width="34.2" height="40.3" viewBox="22.6 14.9 48.8 57.5" preserveAspectRatio="none"><defs><linearGradient id="pg" gradientUnits="userSpaceOnUse" x1="40" y1="15" x2="54" y2="72"><stop offset="0" stop-color="#909090"/><stop offset="0.5" stop-color="#606060"/><stop offset="0.55" stop-color="#505050"/><stop offset="1" stop-color="#3e3e3e"/></linearGradient></defs><ellipse cx="47" cy="71" rx="23" ry="2.5" fill="rgba(0,0,0,0.18)"/><path fill="url(#pg)" d="M46.85 14.9C54.5 14.9 59.5 21 59.5 29C59.5 32.5 58.8 34 58.2 34.8C58 38 57.2 40 56 41.7C55 44 53.5 46 53 47.6L53 49.5C53 51.5 56 52.5 60 53.2L66 54.3C70 55.2 71.4 57.5 71.4 60.5L71.4 66C71.4 70 60 71.7 47 71.7C34 71.7 22.6 70 22.6 66L22.600 60.5C22.6 57.5 24 55.2 28 54.3L34 53.2C38 52.5 41 51.5 41 49.5L41 47.6C40.5 46 39 44 38.1 41.7C36.9 40 36.1 38 35.9 34.8C35 34 34.2 32.5 34.2 29C34.2 21 39.2 14.9 46.85 14.9Z"/></svg>
<div style="position:absolute;top:1616.34px;font-size:29.44px;line-height:35.33px;color:#0a1464;white-space:pre;left:2445.5px;">SuperAd…</div>
<svg style="position:absolute;left:2641.5px;top:1622.7px;" width="29.0" height="29.0" viewBox="0 0 512 512" preserveAspectRatio="none"><path fill="#9a9a9a" d="M487.4 315.7l-42.600-24.600c4.300-23.200 4.300-47 0-70.200l42.600-24.600c4.900-2.800 7.100-8.600 5.500-14-11.100-35.600-30-67.800-54.700-94.600-3.800-4.100-10-5.100-14.800-2.300L380.800 110c-17.900-15.400-38.500-27.300-60.800-35.100V25.800c0-5.600-3.900-10.500-9.400-11.700-36.700-8.200-74.300-7.800-109.200 0-5.500 1.200-9.400 6.100-9.400 11.700V75c-22.200 7.900-42.800 19.800-60.800 35.100L88.700 85.500c-4.900-2.800-11-1.900-14.800 2.300-24.700 26.700-43.600 58.900-54.700 94.600-1.700 5.400.6 11.200 5.500 14L67.300 221c-4.300 23.200-4.300 47 0 70.200l-42.600 24.600c-4.900 2.800-7.100 8.600-5.500 14 11.100 35.600 30 67.800 54.700 94.600 3.800 4.100 10 5.100 14.800 2.300l42.600-24.600c17.900 15.400 38.500 27.300 60.800 35.100v49.200c0 5.600 3.900 10.500 9.400 11.700 36.700 8.200 74.300 7.800 109.200 0 5.500-1.200 9.400-6.100 9.400-11.700v-49.200c22.200-7.900 42.800-19.800 60.800-35.100l42.600 24.600c4.900 2.800 11 1.900 14.800-2.300 24.700-26.700 43.600-58.900 54.700-94.600 1.500-5.500-.7-11.300-5.600-14.100zM256 336c-44.100 0-80-35.900-80-80s35.900-80 80-80 80 35.900 80 80-35.900 80-80 80z"/></svg>
<div style="position:absolute;left:2885.5px;top:1616.34px;width:368px;overflow:hidden;white-space:pre;font-size:29.44px;line-height:35.33px;color:#0a1464">Record SO2510-0011 modified</div>
<div style="position:absolute;top:1616.34px;font-size:29.44px;line-height:35.33px;color:#1c1c1c;white-space:pre;left:2690.5px;">Events in…</div>
<svg style="position:absolute;left:1998.0px;top:1716.8px;" width="26.5" height="29.5" viewBox="0 0 448 512" preserveAspectRatio="none"><path fill="#96698c" d="M0 464c0 26.5 21.5 48 48 48h352c26.5 0 48-21.5 48-48V192H0v272zm320-196c0-6.6 5.4-12 12-12h40c6.6 0 12 5.4 12 12v40c0 6.6-5.4 12-12 12h-40c-6.6 0-12-5.4-12-12v-40zm0 128c0-6.6 5.4-12 12-12h40c6.6 0 12 5.4 12 12v40c0 6.6-5.4 12-12 12h-40c-6.6 0-12-5.4-12-12v-40zM192 268c0-6.6 5.4-12 12-12h40c6.6 0 12 5.4 12 12v40c0 6.6-5.4 12-12 12h-40c-6.6 0-12-5.4-12-12v-40zm0 128c0-6.6 5.4-12 12-12h40c6.6 0 12 5.4 12 12v40c0 6.6-5.4 12-12 12h-40c-6.6 0-12-5.4-12-12v-40zM64 268c0-6.6 5.4-12 12-12h40c6.6 0 12 5.4 12 12v40c0 6.6-5.4 12-12 12H76c-6.6 0-12-5.4-12-12v-40zm0 128c0-6.6 5.4-12 12-12h40c6.6 0 12 5.4 12 12v40c0 6.6-5.4 12-12 12H76c-6.6 0-12-5.4-12-12v-40zM400 64h-48V16c0-8.8-7.2-16-16-16h-32c-8.8 0-16 7.2-16 16v48H160V16c0-8.8-7.2-16-16-16h-32c-8.8 0-16 7.2-16 16v48H48C21.5 64 0 85.5 0 112v48h448v-48c0-26.5-21.5-48-48-48z"/></svg>
<div style="position:absolute;top:1714.44px;font-size:29.44px;line-height:35.33px;color:#0a1464;white-space:pre;left:2031.7px;">204</div>
<div style="position:absolute;top:1714.44px;font-size:29.44px;line-height:35.33px;color:#1c1c1c;white-space:pre;left:2106.5px;">10/17/25 12:10 PM</div>
<svg style="position:absolute;left:2401.3px;top:1714.1px;" width="34.2" height="40.3" viewBox="22.6 14.9 48.8 57.5" preserveAspectRatio="none"><defs><linearGradient id="pg" gradientUnits="userSpaceOnUse" x1="40" y1="15" x2="54" y2="72"><stop offset="0" stop-color="#909090"/><stop offset="0.5" stop-color="#606060"/><stop offset="0.55" stop-color="#505050"/><stop offset="1" stop-color="#3e3e3e"/></linearGradient></defs><ellipse cx="47" cy="71" rx="23" ry="2.5" fill="rgba(0,0,0,0.18)"/><path fill="url(#pg)" d="M46.85 14.9C54.5 14.9 59.5 21 59.5 29C59.5 32.5 58.8 34 58.2 34.8C58 38 57.2 40 56 41.7C55 44 53.5 46 53 47.6L53 49.5C53 51.5 56 52.5 60 53.2L66 54.3C70 55.2 71.4 57.5 71.4 60.5L71.4 66C71.4 70 60 71.7 47 71.7C34 71.7 22.6 70 22.6 66L22.600 60.5C22.6 57.5 24 55.2 28 54.3L34 53.2C38 52.5 41 51.5 41 49.5L41 47.6C40.5 46 39 44 38.1 41.7C36.9 40 36.1 38 35.9 34.8C35 34 34.2 32.5 34.2 29C34.2 21 39.2 14.9 46.85 14.9Z"/></svg>
<div style="position:absolute;top:1714.44px;font-size:29.44px;line-height:35.33px;color:#0a1464;white-space:pre;left:2445.5px;">SuperAd…</div>
<svg style="position:absolute;left:2641.5px;top:1720.8px;" width="29.0" height="29.0" viewBox="0 0 512 512" preserveAspectRatio="none"><path fill="#9a9a9a" d="M487.4 315.7l-42.600-24.600c4.300-23.200 4.300-47 0-70.200l42.600-24.600c4.900-2.800 7.100-8.600 5.500-14-11.100-35.600-30-67.800-54.700-94.600-3.800-4.100-10-5.100-14.800-2.300L380.800 110c-17.900-15.400-38.500-27.300-60.800-35.100V25.800c0-5.600-3.900-10.500-9.400-11.700-36.700-8.200-74.300-7.800-109.200 0-5.500 1.200-9.400 6.100-9.400 11.700V75c-22.200 7.900-42.800 19.800-60.800 35.100L88.700 85.500c-4.900-2.800-11-1.900-14.800 2.300-24.700 26.700-43.600 58.900-54.700 94.600-1.700 5.400.6 11.200 5.500 14L67.300 221c-4.300 23.200-4.300 47 0 70.200l-42.600 24.600c-4.900 2.800-7.100 8.600-5.500 14 11.100 35.600 30 67.800 54.700 94.600 3.800 4.100 10 5.100 14.800 2.300l42.600-24.600c17.900 15.400 38.500 27.300 60.800 35.100v49.200c0 5.600 3.900 10.500 9.400 11.700 36.700 8.200 74.300 7.800 109.200 0 5.500-1.200 9.400-6.100 9.400-11.700v-49.200c22.200-7.900 42.800-19.800 60.800-35.100l42.600 24.600c4.900 2.800 11 1.900 14.800-2.300 24.700-26.700 43.600-58.900 54.700-94.600 1.500-5.500-.7-11.300-5.600-14.100zM256 336c-44.100 0-80-35.900-80-80s35.900-80 80-80 80 35.900 80 80-35.900 80-80 80z"/></svg>
<div style="position:absolute;left:2885.5px;top:1714.44px;width:368px;overflow:hidden;white-space:pre;font-size:29.44px;line-height:35.33px;color:#0a1464">Order SO2510-0011 validated</div>
<div style="position:absolute;top:1714.44px;font-size:29.44px;line-height:35.33px;color:#1c1c1c;white-space:pre;left:2690.5px;">Events in…</div>
<div style="position:absolute;left:1972.0px;top:1784.0px;width:1282.0px;height:29.0px;background:#fafafa;border-bottom:2px solid #ececec"></div>
<div style="position:absolute;left:1979.0px;top:1791.3px;width:1147.0px;height:15.4px;background:#c1c1c1;border-radius:7.7px"></div>
<div style="position:absolute;left:1756.0px;top:1796.0px;width:1180.0px;height:127.0px;background:rgba(255,255,255,0.95);border-radius:7px;box-shadow:0 0 8px rgba(0,0,0,0.5)"></div>
<div style="position:absolute;top:1841.64px;font-size:29.44px;line-height:35.33px;color:#000;white-space:pre;left:1796.0px;">Paid</div>
</div>
</body></html>
